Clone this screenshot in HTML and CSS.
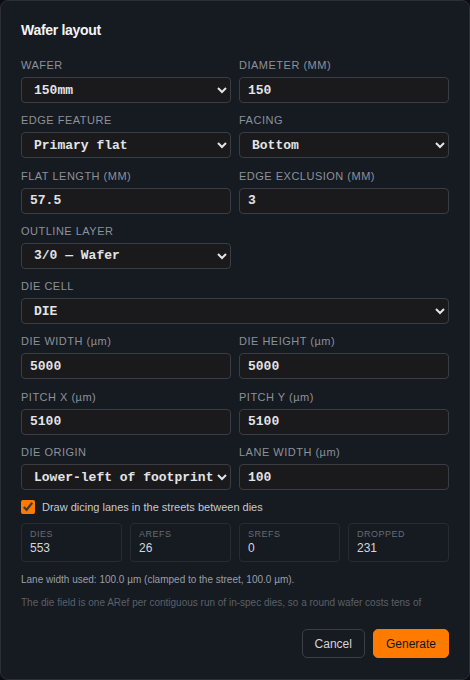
FILE: index.html
```html
<!DOCTYPE html>
<html lang="en">
<head>
    <meta charset="UTF-8">
    <meta name="viewport" content="width=device-width, initial-scale=1.0">
    <title>Wafer layout</title>
    <link rel="stylesheet" href="styles.css">
</head>
<body>

<div class="dialog">
    <div class="dialog-header">
        <h2>Wafer layout</h2>
    </div>

    <div class="dialog-body">
        <div class="form-grid">
            <div class="field">
                <label>Wafer</label>
                <select>
                    <option>150mm</option>
                    <option>200mm</option>
                    <option>300mm</option>
                </select>
            </div>
            <div class="field">
                <label>Diameter (mm)</label>
                <input type="text" value="150">
            </div>

            <div class="field">
                <label>Edge feature</label>
                <select>
                    <option>Primary flat</option>
                    <option>Notch</option>
                    <option>None</option>
                </select>
            </div>
            <div class="field">
                <label>Facing</label>
                <select>
                    <option>Bottom</option>
                    <option>Top</option>
                    <option>Left</option>
                    <option>Right</option>
                </select>
            </div>

            <div class="field">
                <label>Flat length (mm)</label>
                <input type="text" value="57.5">
            </div>
            <div class="field">
                <label>Edge exclusion (mm)</label>
                <input type="text" value="3">
            </div>

            <div class="field">
                <label>Outline layer</label>
                <select>
                    <option>3/0 — Wafer</option>
                </select>
            </div>
            <div></div>

            <div class="field wide">
                <label>Die cell</label>
                <select>
                    <option>DIE</option>
                </select>
            </div>

            <div class="field">
                <label class="plain">DIE WIDTH (µm)</label>
                <input type="text" value="5000">
            </div>
            <div class="field">
                <label class="plain">DIE HEIGHT (µm)</label>
                <input type="text" value="5000">
            </div>

            <div class="field">
                <label class="plain">PITCH X (µm)</label>
                <input type="text" value="5100">
            </div>
            <div class="field">
                <label class="plain">PITCH Y (µm)</label>
                <input type="text" value="5100">
            </div>

            <div class="field">
                <label>Die origin</label>
                <select>
                    <option>Lower-left of footprint</option>
                    <option>Center</option>
                </select>
            </div>
            <div class="field">
                <label class="plain">LANE WIDTH (µm)</label>
                <input type="text" value="100">
            </div>
        </div>

        <label class="check-row">
            <input type="checkbox" checked>
            <span>Draw dicing lanes in the streets between dies</span>
        </label>

        <div class="stats">
            <div class="stat">
                <div class="stat-label">Dies</div>
                <div class="stat-value">553</div>
            </div>
            <div class="stat">
                <div class="stat-label">ARefs</div>
                <div class="stat-value">26</div>
            </div>
            <div class="stat">
                <div class="stat-label">SRefs</div>
                <div class="stat-value">0</div>
            </div>
            <div class="stat">
                <div class="stat-label">Dropped</div>
                <div class="stat-value">231</div>
            </div>
        </div>

        <p class="hint">Lane width used: 100.0 µm (clamped to the street, 100.0 µm).</p>
        <p class="note">The die field is one ARef per contiguous run of in-spec dies, so a round wafer costs tens of ARefs rather than hundreds of SRefs. Dies that cross the edge exclusion are dropped.</p>
    </div>

    <div class="dialog-footer">
        <button class="btn">Cancel</button>
        <button class="btn primary">Generate</button>
    </div>
</div>

</body>
</html>
```

FILE: styles.css
```css
html, body {
    margin: 0;
    height: 100%;
    background: #0b0d11;
    color-scheme: dark;
}

body {
    font-family: "Liberation Sans", Arial, sans-serif;
    color: #e6e8eb;
}

.dialog {
    box-sizing: border-box;
    height: 100vh;
    display: flex;
    flex-direction: column;
    background: #161a21;
    border: 1px solid #2b2f37;
    border-radius: 8px;
    overflow: hidden;
}

.dialog-header {
    padding: 19px 20px 0;
}

.dialog-header h2 {
    margin: 0;
    font-size: 14px;
    line-height: 20px;
    font-weight: 700;
    letter-spacing: -0.3px;
    color: #f3f4f6;
}

.dialog-body {
    flex: 1;
    min-height: 0;
    overflow-y: auto;
    scrollbar-width: none;
    padding: 18px 20px 0;
}

.form-grid {
    display: grid;
    grid-template-columns: 1fr 1fr;
    column-gap: 8px;
    row-gap: 10.3px;
}

.field {
    display: flex;
    flex-direction: column;
    gap: 5px;
}

.field.wide {
    grid-column: span 2;
}

.field label {
    font-size: 11px;
    line-height: 14px;
    text-transform: uppercase;
    letter-spacing: 0.5px;
    color: #8d9199;
}

.field label.plain {
    text-transform: none;
}

.field input, .field select {
    box-sizing: border-box;
    width: 100%;
    height: 26px;
    margin: 0;
    padding: 0 8px;
    font-family: "Liberation Mono", "DejaVu Sans Mono", monospace;
    font-size: 13px;
    font-weight: 700;
    color: #e2e4e7;
    background-color: #1a1a1c;
    border: 1px solid #3a3d43;
    border-radius: 4px;
    outline: none;
}

.field select {
    padding: 0 0 0 8px;
}

.check-row {
    display: flex;
    align-items: center;
    gap: 7px;
    margin-top: 9px;
    font-size: 11px;
    line-height: 16px;
    color: #c6cad0;
}

.check-row input {
    width: 14px;
    height: 14px;
    margin: 0;
    accent-color: #ff7a00;
}

.stats {
    display: grid;
    grid-template-columns: repeat(4, 1fr);
    gap: 8px;
    margin-top: 8px;
}

.stat {
    border: 1px solid #272b32;
    border-radius: 4px;
    padding: 4px 8px;
}

.stat-label {
    font-size: 9px;
    line-height: 12px;
    text-transform: uppercase;
    letter-spacing: 0.5px;
    color: #676c74;
}

.stat-value {
    font-size: 12px;
    line-height: 17px;
    color: #d3d6da;
}

.hint, .note {
    font-size: 10px;
}

.hint {
    margin: 11px 0 0;
    line-height: 14px;
    color: #9b9fa6;
}

.note {
    margin: 8px 0 0;
    line-height: 16px;
    color: #5b6068;
}

.dialog-footer {
    display: flex;
    justify-content: flex-end;
    gap: 8px;
    padding: 17px 20px 21px;
}

.btn {
    height: 29px;
    padding: 0 12px;
    font-family: "Liberation Sans", Arial, sans-serif;
    font-size: 12px;
    color: #d2d5da;
    background: transparent;
    border: 1px solid #3a3e46;
    border-radius: 5px;
    cursor: pointer;
}

.btn.primary {
    background: #ff7a00;
    border-color: #ff7a00;
    color: #15171b;
}
```
